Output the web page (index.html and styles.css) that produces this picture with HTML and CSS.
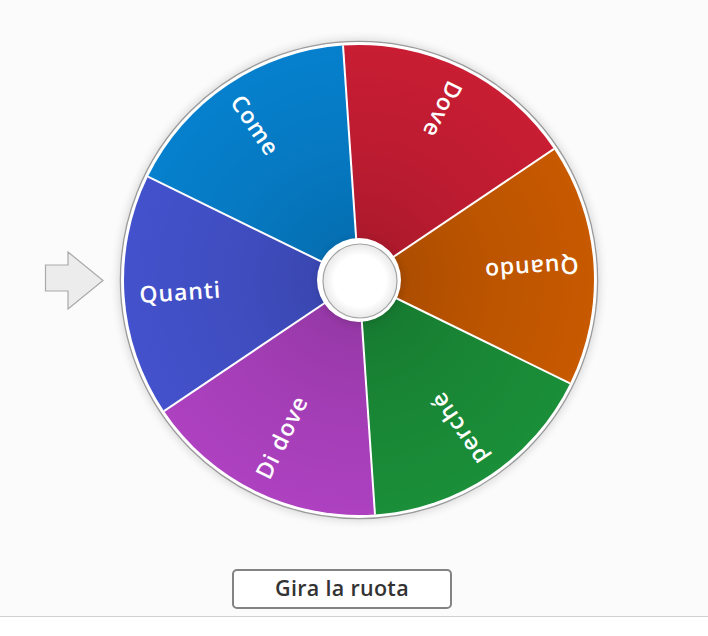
FILE: index.html
```html
<!DOCTYPE html>
<html lang="it">
<head>
<meta charset="utf-8">
<title>Ruota</title>
<link rel="stylesheet" href="styles.css">
</head>
<body>
<main class="page">
  <div class="stage">
    <svg class="pointer" width="60" height="60" viewBox="0 0 60 60">
      <polygon points="1.5,15 24,15 24,2 59,30.5 24,59 24,41 1.5,41" fill="#ececec" stroke="#a9a9a9" stroke-width="1.2"/>
    </svg>
    <svg class="wheel" width="520" height="520" viewBox="0 0 520 520">
      <defs>
        <filter id="halo" x="-20%" y="-20%" width="140%" height="140%">
          <feGaussianBlur stdDeviation="4"/>
        </filter>
        <radialGradient id="shade" cx="260" cy="260" r="235" gradientUnits="userSpaceOnUse">
          <stop offset="0" stop-color="#000" stop-opacity="0.17"/>
          <stop offset="0.55" stop-color="#000" stop-opacity="0.06"/>
          <stop offset="1" stop-color="#000" stop-opacity="0"/>
        </radialGradient>
        <radialGradient id="hubfill" cx="0.5" cy="0.5" r="0.5">
          <stop offset="0.7" stop-color="#ffffff"/>
          <stop offset="1" stop-color="#e9e9e9"/>
        </radialGradient>
      </defs>
      <circle cx="260" cy="260" r="241" fill="#000" opacity="0.13" filter="url(#halo)"/>
      <circle cx="260" cy="260" r="238.6" fill="#ffffff" stroke="#9a9a9a" stroke-width="1.3"/>
      <path d="M260,260 L244.02,25.55 A235,235 0 0 1 455.05,128.94 Z" fill="#c81d33"/>
      <path d="M260,260 L455.05,128.94 A235,235 0 0 1 471.03,363.38 Z" fill="#c75900"/>
      <path d="M260,260 L471.03,363.38 A235,235 0 0 1 275.98,494.45 Z" fill="#1a8e38"/>
      <path d="M260,260 L275.98,494.45 A235,235 0 0 1 64.95,391.06 Z" fill="#ad41c0"/>
      <path d="M260,260 L64.95,391.06 A235,235 0 0 1 48.97,156.62 Z" fill="#4352cc"/>
      <path d="M260,260 L48.97,156.62 A235,235 0 0 1 244.02,25.55 Z" fill="#0680cd"/>
      <circle cx="260" cy="260" r="235" fill="url(#shade)"/>
      <g stroke="#ffffff" stroke-width="2">
        <line x1="260" y1="260" x2="244.02" y2="25.55"/>
        <line x1="260" y1="260" x2="455.05" y2="128.94"/>
        <line x1="260" y1="260" x2="471.03" y2="363.38"/>
        <line x1="260" y1="260" x2="275.98" y2="494.45"/>
        <line x1="260" y1="260" x2="64.95" y2="391.06"/>
        <line x1="260" y1="260" x2="48.97" y2="156.62"/>
      </g>
      <g class="labels" transform="translate(260 260)">
        <text transform="rotate(116.1)" x="-220" y="0" dy="0.35em">Dove</text>
        <text transform="rotate(176.1)" x="-220" y="0" dy="0.35em">Quando</text>
        <text transform="rotate(236.1)" x="-220" y="0" dy="0.35em">perché</text>
        <text transform="rotate(-63.9)" x="-220" y="0" dy="0.35em">Di dove</text>
        <text transform="rotate(-3.9)" x="-220" y="0" dy="0.35em">Quanti</text>
        <text transform="rotate(56.1)" x="-220" y="0" dy="0.35em">Come</text>
      </g>
      <circle cx="261" cy="262" r="42.5" fill="#000" opacity="0.12" filter="url(#halo)"/>
      <circle cx="260" cy="260" r="42" fill="#ffffff"/>
      <circle cx="261" cy="261" r="37" fill="url(#hubfill)" stroke="#a3a3a3" stroke-width="1.2"/>
    </svg>
  </div>
  <div class="controls">
    <button class="spin-btn" type="button">Gira la ruota</button>
  </div>
  <div class="footer-line"></div>
</main>
</body>
</html>
```
FILE: styles.css
```css
html, body {
  margin: 0;
  padding: 0;
  background: #ffffff;
}

.page {
  width: 708px;
  height: 636px;
  background: #fbfbfb;
  display: flex;
  flex-direction: column;
  overflow: hidden;
}

.stage {
  display: flex;
  align-items: center;
  padding-top: 20px;
  padding-left: 44px;
  height: 520px;
}

.pointer {
  display: block;
  flex: none;
  overflow: visible;
}

.wheel {
  display: block;
  flex: none;
  margin-left: -5px;
}

.labels text {
  font-family: "Open Sans", "Noto Sans", sans-serif;
  font-size: 23px;
  font-weight: 600;
  letter-spacing: 0.9px;
  fill: #ffffff;
}

.controls {
  padding-top: 29px;
  padding-left: 232px;
  height: 47px;
}

.spin-btn {
  box-sizing: border-box;
  width: 220px;
  height: 40px;
  background: #ffffff;
  border: 2px solid #838383;
  border-radius: 5px;
  font-family: "Open Sans", "Noto Sans", sans-serif;
  font-size: 21.5px;
  font-weight: 600;
  letter-spacing: 0.3px;
  color: #333333;
  padding: 0 0 2px 0;
  line-height: 1;
}

.footer-line {
  flex: 1;
  border-top: 1px solid #d2d2d2;
  background: #ffffff;
}
```
